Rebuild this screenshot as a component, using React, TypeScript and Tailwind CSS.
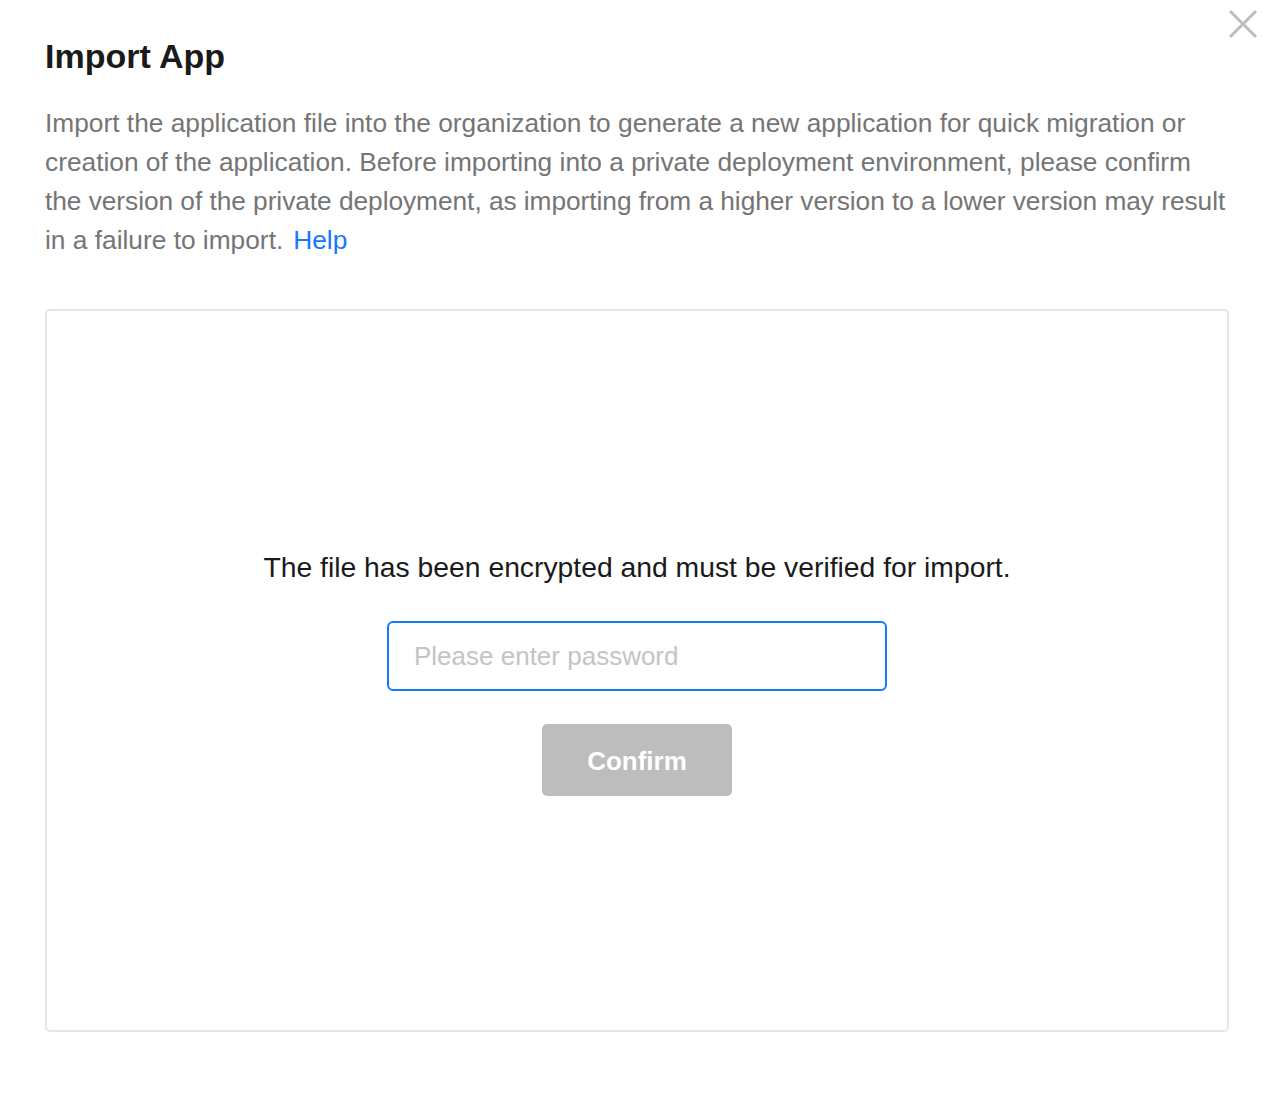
export default function App() {
  return (
    <div
      className="relative min-h-[1110px] w-[1274px] bg-white px-[45px] pt-[36px]"
      style={{ fontFamily: '"Liberation Sans", Arial, sans-serif' }}
    >
      <button type="button" className="absolute right-[15px] top-[8px] text-[#bdbdbd]" aria-label="Close">
        <svg width="32" height="32" viewBox="0 0 32 32" fill="none" stroke="currentColor" strokeWidth="3">
          <path d="M3 3L29 29M29 3L3 29" />
        </svg>
      </button>

      <h1 className="text-[34px] font-bold leading-[40px] text-[#1a1a1a]">Import App</h1>

      <p className="mt-[28px] whitespace-nowrap text-[26.3px] leading-[39px] text-[#757575]">
        Import the application file into the organization to generate a new application for quick migration or
        <br />
        creation of the application. Before importing into a private deployment environment, please confirm
        <br />
        <span className="tracking-[-0.05px]">
          the version of the private deployment, as importing from a higher version to a lower version may result
        </span>
        <br />
        in a failure to import.
        <a href="#" className="ml-[10px] text-[#1677ff]">
          Help
        </a>
      </p>

      <div className="mt-[49px] flex h-[723px] flex-col items-center rounded-[5px] border-2 border-[#e6e6e6] pt-[238px]">
        <p className="text-[28.3px] leading-[36px] text-[#1a1a1a]">
          The file has been encrypted and must be verified for import.
        </p>
        <input
          type="password"
          placeholder="Please enter password"
          className="mt-[36px] h-[70px] w-[500px] rounded-[6px] border-2 border-[#1677ff] px-[25px] text-[26px] text-[#1a1a1a] outline-none placeholder:text-[#c4c4c4]"
        />
        <button
          type="button"
          className="mt-[33px] h-[72px] w-[190px] rounded-[5px] bg-[#bdbdbd] pt-[3px] text-[26px] font-bold text-white"
        >
          Confirm
        </button>
      </div>
    </div>
  );
}
